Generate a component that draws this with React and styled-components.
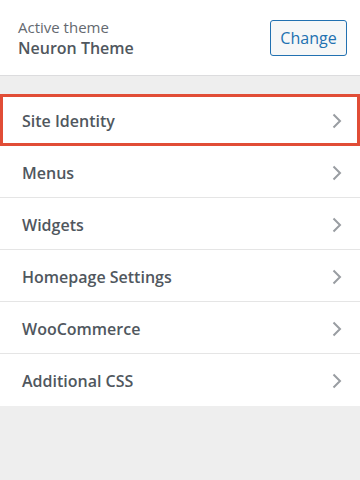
import styled, { createGlobalStyle } from "styled-components";

const GlobalStyle = createGlobalStyle`
  body {
    margin: 0;
    background: #eeeeee;
    font-family: "Open Sans", "Noto Sans", sans-serif;
  }
`;

const Panel = styled.div`
  width: 360px;
  min-height: 480px;
  background: #eeeeee;
`;

const Header = styled.div`
  height: 76px;
  box-sizing: border-box;
  background: #ffffff;
  border-bottom: 1px solid #dcdcde;
  display: flex;
  align-items: center;
  justify-content: space-between;
  padding: 1px 13px 0 18px;
`;

const ThemeInfo = styled.div`
  display: flex;
  flex-direction: column;
`;

const Label = styled.span`
  font-size: 15px;
  line-height: 20px;
  color: #646970;
`;

const ThemeName = styled.span`
  font-size: 16px;
  font-weight: 600;
  line-height: 22px;
  color: #50575e;
`;

const ChangeButton = styled.button`
  height: 36px;
  width: 77px;
  padding: 0;
  border: 1px solid #2271b1;
  border-radius: 3px;
  background: #f6f7f7;
  color: #2271b1;
  font-family: inherit;
  font-size: 16px;
  cursor: pointer;
`;

const List = styled.ul`
  list-style: none;
  margin: 18px 0 0;
  padding: 0;
  background: #ffffff;
`;

const Item = styled.li`
  height: 52px;
  box-sizing: border-box;
  display: flex;
  align-items: center;
  justify-content: space-between;
  padding: 2px 18px 0 22px;
  border-bottom: 1px solid #e5e5e5;
  color: #50575e;
  font-size: 16px;
  font-weight: 600;
  cursor: pointer;

  ${({ $active }) =>
    $active &&
    `
    border: 3px solid #e14d36;
    padding: 1px 15px 0 19px;
  `}

  &:last-child {
    border-bottom: none;
  }
`;

const Chevron = () => (
  <svg width="10" height="16" viewBox="0 0 10 16" fill="none">
    <path d="M1.5 1.5l6.5 6.5-6.5 6.5" stroke="#999da2" strokeWidth="2" />
  </svg>
);

const sections = [
  "Site Identity",
  "Menus",
  "Widgets",
  "Homepage Settings",
  "WooCommerce",
  "Additional CSS",
];

export default function App() {
  return (
    <Panel>
      <GlobalStyle />
      <Header>
        <ThemeInfo>
          <Label>Active theme</Label>
          <ThemeName>Neuron Theme</ThemeName>
        </ThemeInfo>
        <ChangeButton>Change</ChangeButton>
      </Header>
      <List>
        {sections.map((name, i) => (
          <Item key={name} $active={i === 0}>
            {name}
            <Chevron />
          </Item>
        ))}
      </List>
    </Panel>
  );
}
